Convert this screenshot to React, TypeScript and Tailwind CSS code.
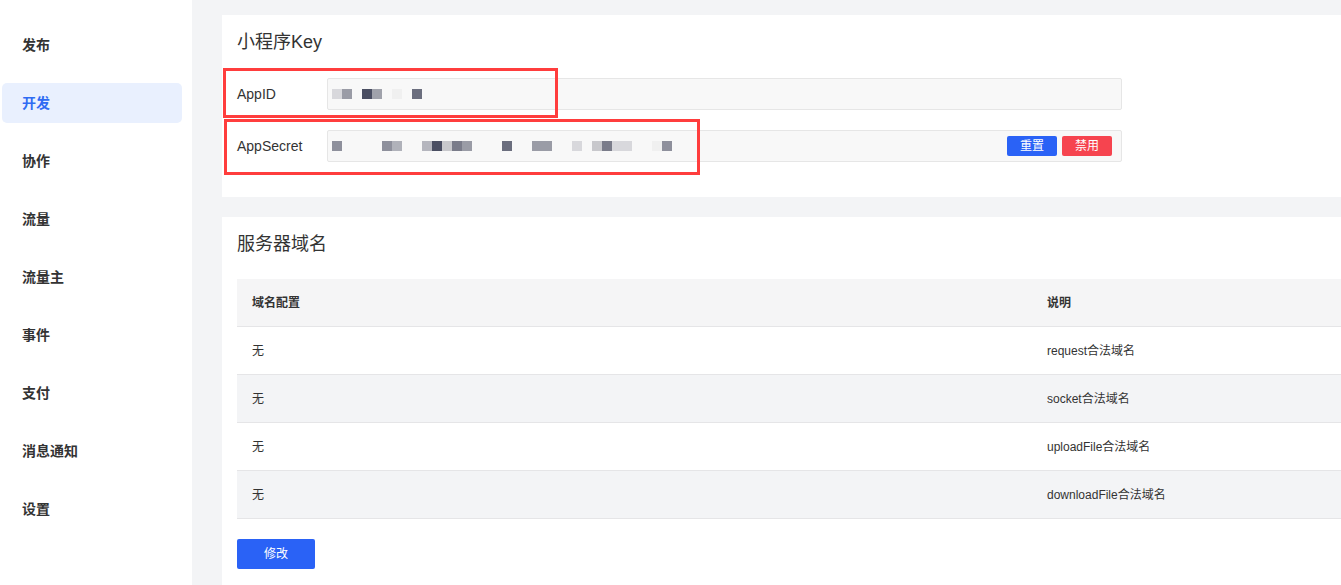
import React from "react";

const font = { fontFamily: '"Liberation Sans", "Noto Sans CJK SC", sans-serif' };

const menu = ["发布", "开发", "协作", "流量", "流量主", "事件", "支付", "消息通知", "设置"];

const appIdPx: (string | null)[] = ["#d8d8dc", "#9a9ca6", null, "#4a4e62", "#a0a2ab", null, "#f0f0f0", null, "#6b6e7e"];

const secretMap: Record<number, string> = {
  0: "#8e909c",
  5: "#8e909c",
  6: "#b0b2ba",
  9: "#b5b6be",
  10: "#4a4e62",
  11: "#c8c8cc",
  12: "#7a7c8a",
  13: "#9a9ca6",
  17: "#6b6e7e",
  20: "#9a9ca6",
  21: "#9a9ca6",
  24: "#d8d8dc",
  26: "#c8c8cc",
  27: "#7a7c8a",
  28: "#d8d8dc",
  29: "#d8d8dc",
  32: "#f0f0f0",
  33: "#8e909c",
};
const secretPx: (string | null)[] = Array.from({ length: 34 }, (_, i) => secretMap[i] ?? null);

function Pixels({ colors }: { colors: (string | null)[] }) {
  return (
    <div className="flex h-[10px]">
      {colors.map((c, i) => (
        <div key={i} className="w-[10px] h-[10px]" style={{ backgroundColor: c ?? "transparent" }} />
      ))}
    </div>
  );
}

const rows = [
  ["无", "request合法域名"],
  ["无", "socket合法域名"],
  ["无", "uploadFile合法域名"],
  ["无", "downloadFile合法域名"],
];

export default function App() {
  return (
    <div className="w-[1341px] h-[585px] overflow-hidden flex bg-[#f3f4f6] text-[#333]" style={font}>
      <aside className="w-[192px] shrink-0 bg-white pt-[25px] pl-[2px] pr-[10px] flex flex-col gap-[18px]">
        {menu.map((m) => {
          const active = m === "开发";
          return (
            <div
              key={m}
              className={
                "h-[40px] flex items-center pl-[20px] rounded-[5px] text-[14px] font-bold " +
                (active ? "bg-[#e9f0fe] text-[#2f6bf3]" : "text-[#333]")
              }
            >
              {m}
            </div>
          );
        })}
      </aside>

      <main className="flex-1 pl-[30px] pt-[15px] flex flex-col gap-[20px] min-w-0">
        <section className="relative w-[1140px] shrink-0 bg-white h-[182px] px-[15px] pt-[15px]">
          <h2 className="text-[18px] leading-[24px] text-[#333]">小程序Key</h2>
          <div className="mt-[24px] flex items-center">
            <div className="w-[90px] text-[14px]">AppID</div>
            <div className="w-[795px] h-[32px] bg-[#f8f8f8] border border-[#e6e6e6] rounded-[2px] flex items-center pl-[4px]">
              <Pixels colors={appIdPx} />
            </div>
          </div>
          <div className="mt-[20px] flex items-center">
            <div className="w-[90px] text-[14px]">AppSecret</div>
            <div className="w-[795px] h-[32px] bg-[#f8f8f8] border border-[#e6e6e6] rounded-[2px] flex items-center pl-[4px] pr-[9px]">
              <Pixels colors={secretPx} />
              <div className="ml-auto flex gap-[5px]">
                <button className="w-[50px] h-[20px] rounded-[2px] bg-[#2a62f6] text-white text-[12px] leading-[20px]">重置</button>
                <button className="w-[50px] h-[20px] rounded-[2px] bg-[#f6444f] text-white text-[12px] leading-[20px]">禁用</button>
              </div>
            </div>
          </div>
          <div className="absolute left-[1px] top-[53px] w-[335px] h-[50px] border-[3px] border-[#ff3d3d] pointer-events-none" />
          <div className="absolute left-[2px] top-[104px] w-[476px] h-[56px] border-[3px] border-[#ff3d3d] pointer-events-none" />
        </section>

        <section className="w-[1140px] shrink-0 bg-white px-[15px] pt-[15px] pb-[20px]">
          <h2 className="text-[18px] leading-[24px] text-[#333]">服务器域名</h2>
          <div className="mt-[23px] w-[1110px] text-[12px]">
            <div className="h-[48px] flex items-center bg-[#f5f5f6] border-b border-[#e5e5e7] font-bold">
              <div className="w-[810px] pl-[15px]">域名配置</div>
              <div>说明</div>
            </div>
            {rows.map((r, i) => (
              <div
                key={i}
                className={
                  "h-[48px] flex items-center border-b border-[#e5e5e7] " + (i % 2 === 1 ? "bg-[#f3f4f6]" : "bg-white")
                }
              >
                <div className="w-[810px] pl-[15px]">{r[0]}</div>
                <div>{r[1]}</div>
              </div>
            ))}
          </div>
          <button className="mt-[20px] w-[78px] h-[30px] rounded-[2px] bg-[#2a62f6] text-white text-[12px]">修改</button>
        </section>
      </main>
    </div>
  );
}
